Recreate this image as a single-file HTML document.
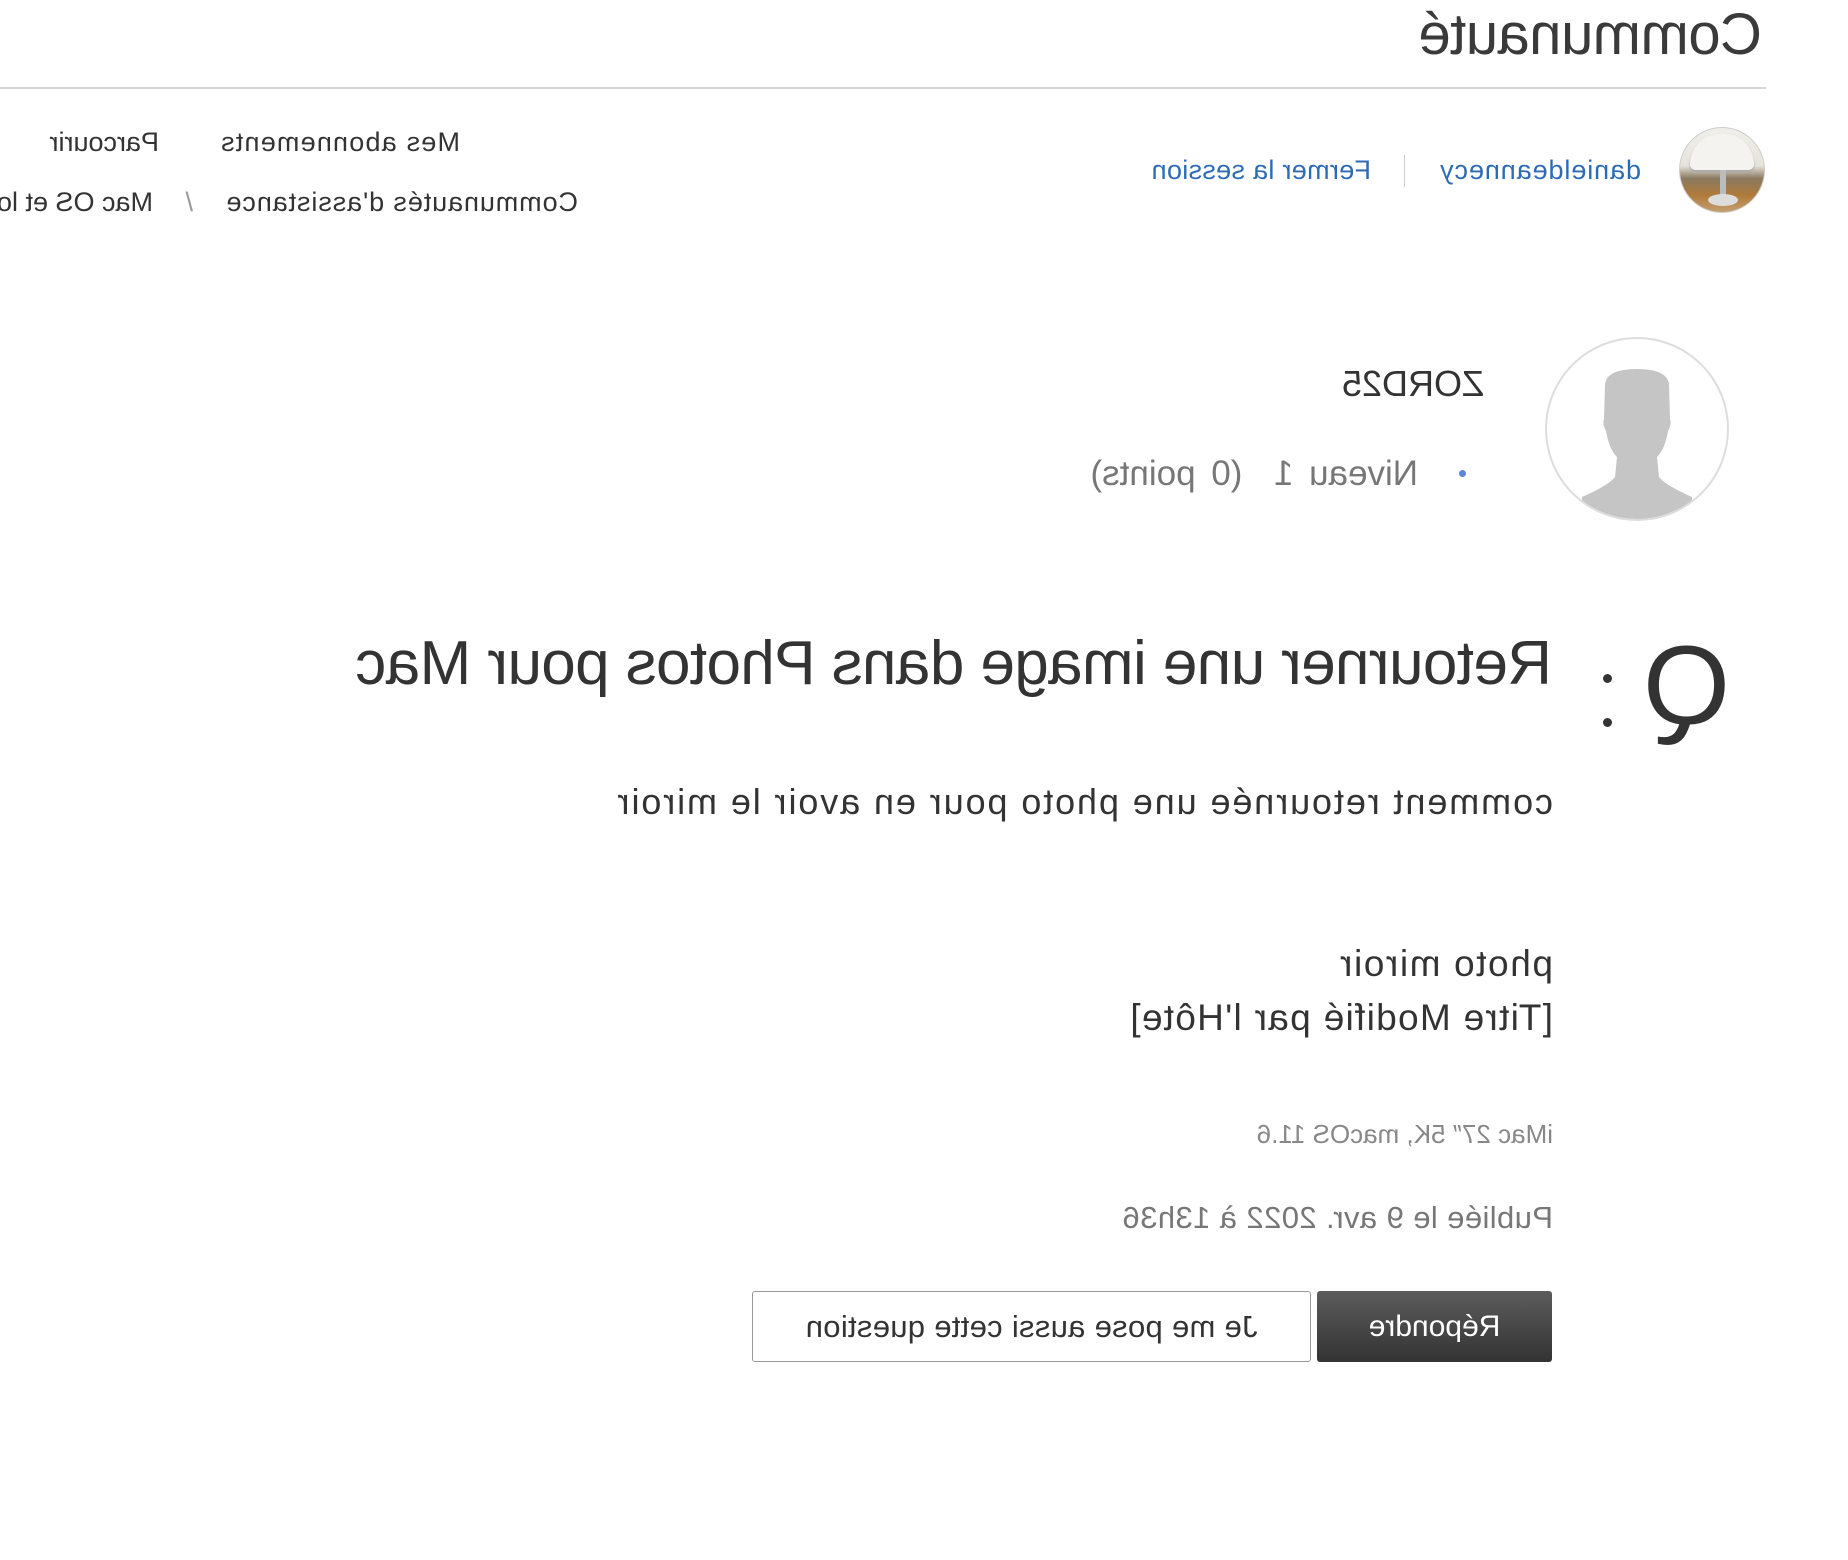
<!DOCTYPE html>
<html><head><meta charset="utf-8"><style>
html,body{margin:0;padding:0;background:#fff;}
#w{position:relative;width:1848px;height:1560px;overflow:hidden;transform:scaleX(-1);font-family:"Liberation Sans",sans-serif;color:#333;}
.a{position:absolute;white-space:nowrap;line-height:1;}
</style></head><body><div id="w">
<div class="a" style="left:86px;top:6px;font-size:58px;color:#3a3a3a;letter-spacing:-0.5px">Communauté</div>
<div class="a" style="left:82px;top:87px;width:1766px;height:2px;background:#d6d6d6"></div>

<div class="a" style="left:83px;top:127px;width:84px;height:84px;border-radius:50%;border:1px solid #ccc;overflow:hidden;background:linear-gradient(180deg,#f0efe9 0%,#e6e3dc 45%,#8a7a60 60%,#b07a3a 80%,#c4a070 100%)">
<div style="position:absolute;left:10px;top:6px;width:64px;height:36px;border-radius:32px 32px 6px 6px;background:#f4f3ef;box-shadow:0 2px 2px #aaa"></div>
<div style="position:absolute;left:38px;top:42px;width:6px;height:28px;background:#bbb"></div>
<div style="position:absolute;left:26px;top:66px;width:30px;height:12px;border-radius:50%;background:#ddd"></div>
</div>
<div class="a" style="left:207px;top:157px;font-size:27px;color:#2d6cb5;letter-spacing:0.9px">danieldeannecy</div>
<div class="a" style="left:443px;top:155px;width:1px;height:32px;background:#ccc"></div>
<div class="a" style="left:477px;top:157px;font-size:27px;color:#2d6cb5;letter-spacing:0.3px">Fermer la session</div>
<div class="a" style="left:1388px;top:129px;font-size:27px;color:#333;letter-spacing:1.2px">Mes abonnements</div>
<div class="a" style="left:1689px;top:129px;font-size:27px;color:#333">Parcourir</div>
<div class="a" style="left:1270px;top:189px;font-size:27px;color:#333;letter-spacing:0.9px">Communautés d'assistance</div>
<div class="a" style="left:1655px;top:189px;font-size:27px;color:#999">/</div>
<div class="a" style="left:1695px;top:189px;font-size:27px;color:#333">Mac OS et logiciels</div>

<div class="a" style="left:119px;top:337px;width:180px;height:180px;border-radius:50%;border:2px solid #ddd;overflow:hidden;background:#fff">
<svg width="180" height="180" viewBox="0 0 180 180"><path d="M58 45 Q60 30 90 30 Q120 30 122 45 L123 80 Q125 85 121 92 Q118 110 110 118 L112 138 Q118 146 145 158 L145 180 L35 180 L35 158 Q62 146 68 138 L70 118 Q62 110 59 92 Q55 85 57 80 Z" fill="#c5c5c5"/></svg>
</div>
<div class="a" style="left:364px;top:366px;font-size:36px;color:#333">ZORD25</div>
<div class="a" style="left:382px;top:470px;width:7px;height:7px;border-radius:50%;background:#5b87d6"></div>
<div class="a" style="left:430px;top:456px;font-size:35px;color:#777;word-spacing:6px">Niveau 1 &nbsp;(0 points)</div>

<div class="a" style="left:118px;top:630px;font-size:112px;color:#333;font-weight:300">Q</div>
<div class="a" style="left:236px;top:674px;width:9px;height:9px;border-radius:50%;background:#333"></div>
<div class="a" style="left:236px;top:718px;width:9px;height:9px;border-radius:50%;background:#333"></div>
<div class="a" style="left:296px;top:633px;font-size:62px;color:#333;letter-spacing:-0.6px">Retourner une image dans Photos pour Mac</div>
<div class="a" style="left:295px;top:784px;font-size:36px;color:#333;letter-spacing:1.9px">comment retournée une photo pour en avoir le miroir</div>
<div class="a" style="left:295px;top:945px;font-size:37px;color:#333;letter-spacing:1.6px">photo miroir</div>
<div class="a" style="left:295px;top:999px;font-size:37px;color:#333;letter-spacing:1.3px">[Titre Modifié par l'Hôte]</div>
<div class="a" style="left:295px;top:1121px;font-size:26px;color:#888">iMac 27″ 5K, macOS 11.6</div>
<div class="a" style="left:295px;top:1202px;font-size:31px;color:#777;letter-spacing:0.4px">Publiée le 9 avr. 2022 à 13h36</div>

<div class="a" style="left:296px;top:1291px;width:235px;height:71px;border-radius:3px;background:linear-gradient(#5c5c5c,#333);color:#fff;font-size:30px;line-height:71px;text-align:center">Répondre</div>
<div class="a" style="left:537px;top:1291px;width:557px;height:69px;border:1px solid #999;border-radius:3px;background:#fff;color:#333;font-size:31px;line-height:69px;text-align:center;letter-spacing:0.3px">Je me pose aussi cette question</div>
</div></body></html>
